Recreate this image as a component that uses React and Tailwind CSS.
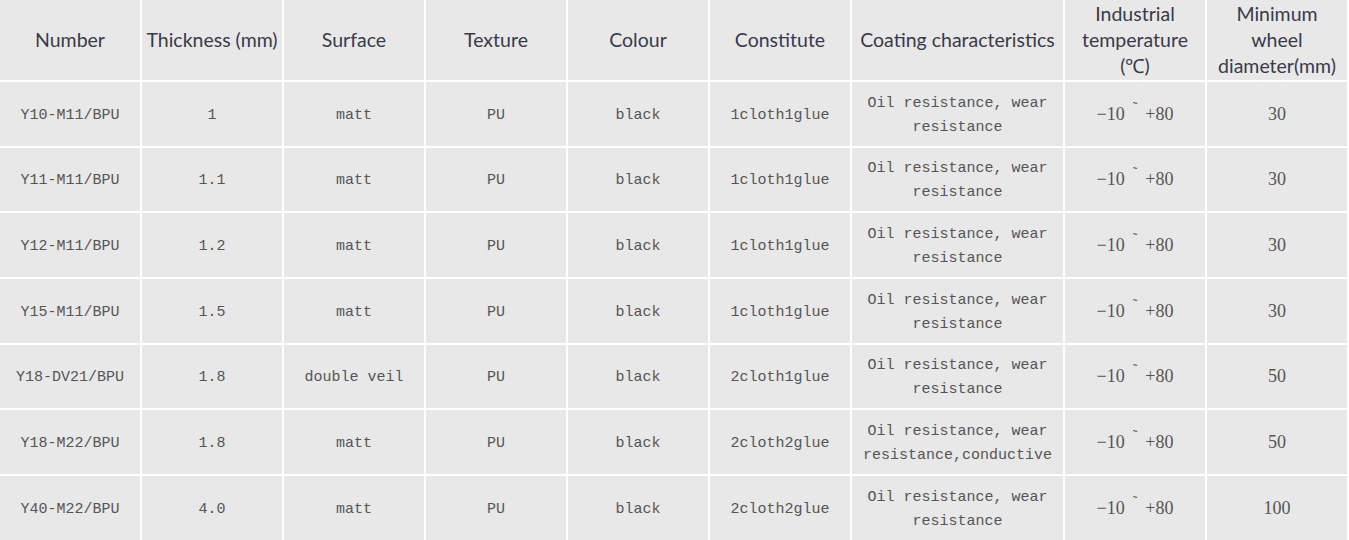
import React from "react";

const rows = [
  ["Y10-M11/BPU", "1", "matt", "PU", "black", "1cloth1glue", ["Oil resistance, wear", "resistance"], "30"],
  ["Y11-M11/BPU", "1.1", "matt", "PU", "black", "1cloth1glue", ["Oil resistance, wear", "resistance"], "30"],
  ["Y12-M11/BPU", "1.2", "matt", "PU", "black", "1cloth1glue", ["Oil resistance, wear", "resistance"], "30"],
  ["Y15-M11/BPU", "1.5", "matt", "PU", "black", "1cloth1glue", ["Oil resistance, wear", "resistance"], "30"],
  ["Y18-DV21/BPU", "1.8", "double veil", "PU", "black", "2cloth1glue", ["Oil resistance, wear", "resistance"], "50"],
  ["Y18-M22/BPU", "1.8", "matt", "PU", "black", "2cloth2glue", ["Oil resistance, wear", "resistance,conductive"], "50"],
  ["Y40-M22/BPU", "4.0", "matt", "PU", "black", "2cloth2glue", ["Oil resistance, wear", "resistance"], "100"],
];

const headers = [
  ["Number"],
  ["Thickness (mm)"],
  ["Surface"],
  ["Texture"],
  ["Colour"],
  ["Constitute"],
  ["Coating characteristics"],
  ["Industrial", "temperature", "(℃)"],
  ["Minimum", "wheel", "diameter(mm)"],
];

const cell = "bg-[#e8e8e8] flex flex-col items-center justify-center text-center";
const mono = "font-['Liberation_Mono',monospace] text-[15px] leading-[24px] text-[#555555] whitespace-pre";
const serif = "font-['Liberation_Serif',serif] text-[18px] leading-[24px] text-[#555555]";

export default function App() {
  return (
    <div className="w-[1349px] h-[540px] bg-white overflow-hidden">
      <div className="grid grid-cols-[140px_140px_140px_140px_140px_140px_211px_140px_140px] grid-rows-[80px_repeat(7,63.67px)] gap-[2px]">
        {headers.map((h, i) => (
          <div key={i} className={cell + " font-['Lato',sans-serif] text-[19.5px] leading-[26px] text-[#3a3a48]"}>
            {h.map((l, j) => (
              <span key={j}>{l}</span>
            ))}
          </div>
        ))}
        {rows.map((r, ri) => (
          <React.Fragment key={ri}>
            {r.slice(0, 6).map((v, ci) => (
              <div key={ci} className={cell + " pt-[4px]"}>
                <span className={mono}>{v}</span>
              </div>
            ))}
            <div className={cell + " pt-[4px]"}>
              {r[6].map((l, j) => (
                <span key={j} className={mono}>{l}</span>
              ))}
            </div>
            <div className={cell}>
              <span className={serif + " flex items-start"}>
                <span>−10</span>
                <span className="mx-[8px] text-[14px] leading-[14px] -mt-[1px]">˜</span>
                <span>+80</span>
              </span>
            </div>
            <div className={cell}>
              <span className={serif}>{r[7]}</span>
            </div>
          </React.Fragment>
        ))}
      </div>
    </div>
  );
}
